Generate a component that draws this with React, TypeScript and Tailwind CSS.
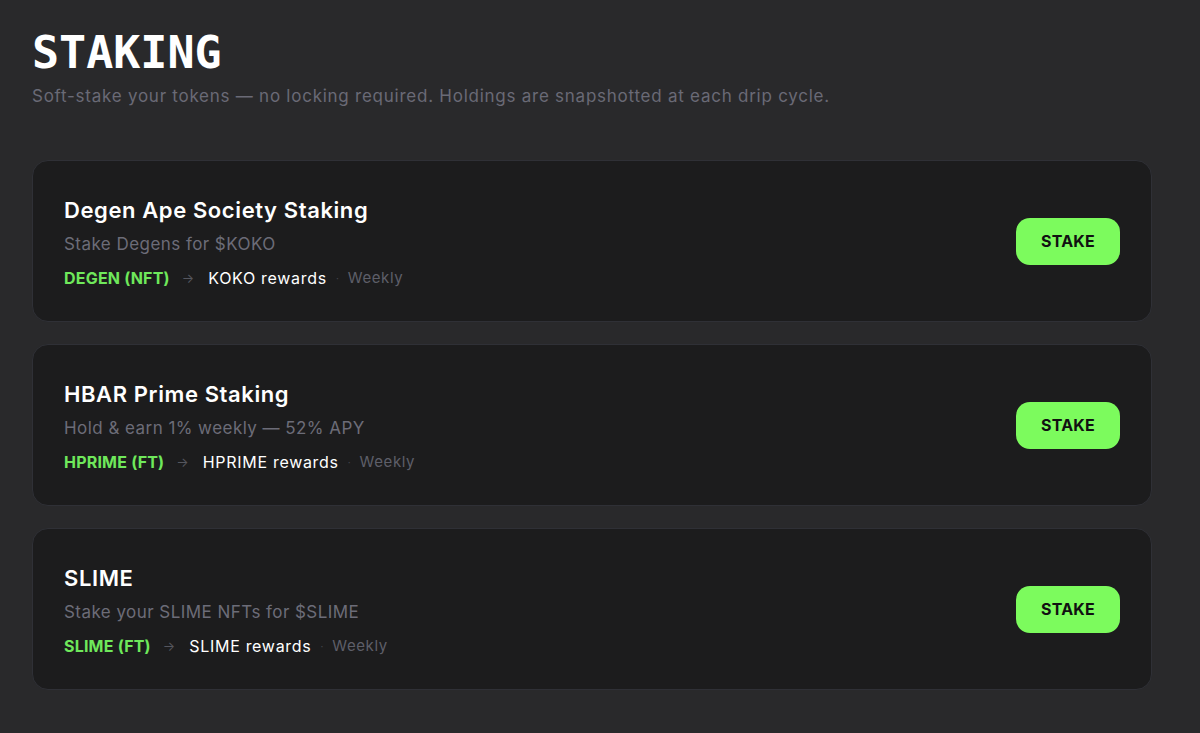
import React from 'react'

interface Pool {
  name: string
  description: string
  token: string
  reward: string
  cadence: string
}

const pools: Pool[] = [
  {
    name: 'Degen Ape Society Staking',
    description: 'Stake Degens for $KOKO',
    token: 'DEGEN (NFT)',
    reward: 'KOKO rewards',
    cadence: 'Weekly',
  },
  {
    name: 'HBAR Prime Staking',
    description: 'Hold & earn 1% weekly — 52% APY',
    token: 'HPRIME (FT)',
    reward: 'HPRIME rewards',
    cadence: 'Weekly',
  },
  {
    name: 'SLIME',
    description: 'Stake your SLIME NFTs for $SLIME',
    token: 'SLIME (FT)',
    reward: 'SLIME rewards',
    cadence: 'Weekly',
  },
]

function PoolCard({ pool }: { pool: Pool }) {
  return (
    <div className="flex items-center justify-between rounded-[16px] border border-[#2f3036] bg-[#1c1c1d] px-[31px] pt-[35px] pb-[31px]">
      <div className="flex flex-col">
        <h2 className="text-[22px] leading-[28px] font-semibold text-white tracking-[0.6px]">{pool.name}</h2>
        <p className="mt-[8px] text-[17px] leading-[24px] text-[#6c6c78] tracking-[0.45px]">{pool.description}</p>
        <div className="mt-[10px] flex items-center text-[16px] leading-[24px]">
          <span className="font-bold text-[#6fe85b] tracking-[0.2px]">{pool.token}</span>
          <span className="ml-[12px] mr-[14px] text-[13px] text-[#55565e]">→</span>
          <span className="text-white tracking-[0.7px]">{pool.reward}</span>
          <span className="mx-[9px] text-[10px] text-[#44454c]">·</span>
          <span className="text-[15px] text-[#5e5f69] tracking-[0.6px]">{pool.cadence}</span>
        </div>
      </div>
      <button className="-mt-[4px] h-[47px] w-[104px] rounded-[14px] bg-[#7cfb5d] text-[16px] font-bold text-[#111] tracking-[0.2px]">
        STAKE
      </button>
    </div>
  )
}

export default function App() {
  return (
    <div
      className="min-h-screen bg-[#29292b] px-[32px] pt-[26px] pb-[40px]"
      style={{ fontFamily: 'Inter, "Noto Sans", sans-serif' }}
    >
      <div className="w-[1120px]">
        <h1
          className="text-[45px] leading-[54px] font-bold text-white"
          style={{ fontFamily: '"DejaVu Sans Mono", "Liberation Mono", monospace' }}
        >
          STAKING
        </h1>
        <p className="mt-[4px] text-[17px] leading-[24px] text-[#6a6a76] tracking-[0.75px]">
          Soft-stake your tokens — no locking required. Holdings are snapshotted at each drip cycle.
        </p>
        <div className="mt-[52px] flex flex-col gap-[22px]">
          {pools.map(pool => (
            <PoolCard key={pool.name} pool={pool} />
          ))}
        </div>
      </div>
    </div>
  )
}
